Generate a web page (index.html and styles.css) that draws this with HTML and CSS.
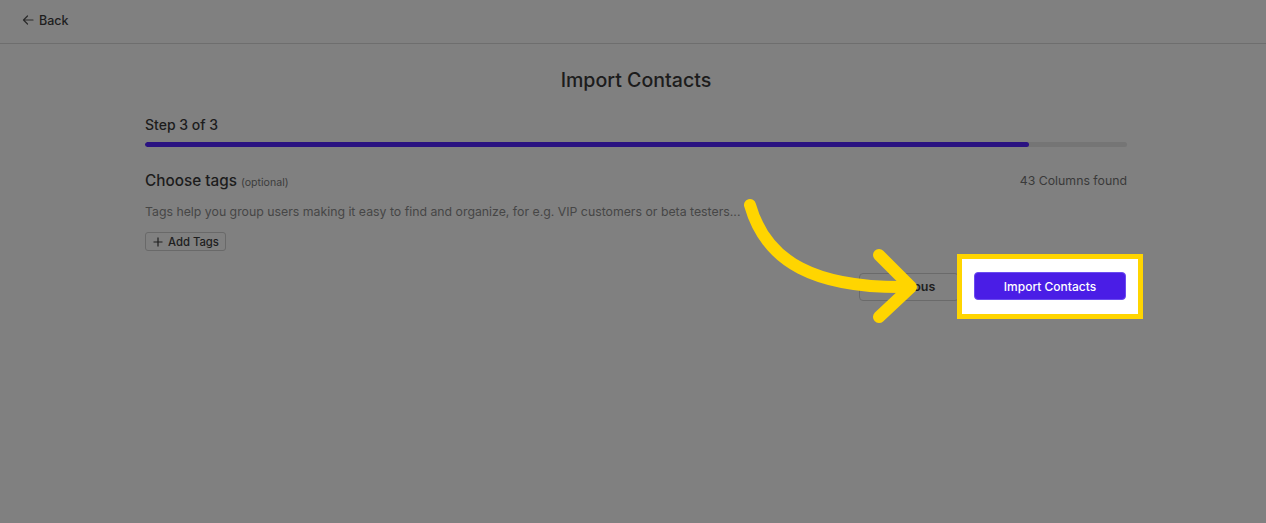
FILE: index.html
```html
<!DOCTYPE html>
<html lang="en">
<head>
  <meta charset="UTF-8" />
  <title>Import Contacts</title>
  <link rel="stylesheet" href="styles.css">
</head>
<body>
  <header class="topbar">
    <a class="back-link" href="#">
      <svg width="12" height="12" viewBox="0 0 12 12" aria-hidden="true">
        <path d="M11 6H1.5M5.5 2L1.5 6l4 4" stroke="#2a2a2a" stroke-width="1.2" fill="none" stroke-linecap="round" stroke-linejoin="round" />
      </svg>
      <span>Back</span>
    </a>
  </header>

  <main class="page">
    <h1 class="title">Import Contacts</h1>
    <div class="step">Step 3 of 3</div>
    <div class="progress"><div class="progress-fill" style="width: 90%"></div></div>

    <div class="section-head">
      <div class="section-title">Choose tags <span class="optional">(optional)</span></div>
      <div class="columns-found">43 Columns found</div>
    </div>
    <p class="hint">Tags help you group users making it easy to find and organize, for e.g. VIP customers or beta testers...</p>
    <button class="add-tags">
      <svg width="10" height="10" viewBox="0 0 10 10" aria-hidden="true">
        <path d="M5 0.5v9M0.5 5h9" stroke="#1e1e1e" stroke-width="1.2" fill="none" />
      </svg>
      Add Tags
    </button>

    <div class="actions">
      <button class="btn-prev">Previous</button>
      <div class="highlight">
        <button class="btn-import">Import Contacts</button>
      </div>
    </div>
  </main>

  <svg class="pointer-arrow" width="1266" height="523" viewBox="0 0 1266 523" aria-hidden="true">
    <g stroke="#ffd500" stroke-width="12" fill="none" stroke-linecap="round" stroke-linejoin="round">
      <path d="M750 205 C766 262, 815 289, 910 287" />
      <path d="M879 255 L911 287 L879 317" />
    </g>
  </svg>
</body>
</html>
```

FILE: styles.css
```css
body {
  margin: 0;
  background: #808080;
  font-family: Inter, "Noto Sans", sans-serif;
  color: #1c1c1c;
  position: relative;
  min-height: 523px;
}
.topbar {
  height: 43px;
  border-bottom: 1px solid #6e6e6e;
  display: flex;
  align-items: center;
  padding-left: 22px;
}
.back-link {
  display: flex;
  align-items: center;
  gap: 5px;
  color: #1e1e1e;
  text-decoration: none;
  font-size: 12.5px;
  font-weight: 500;
  margin-top: -3px;
}
.page {
  width: 982px;
  margin-left: 145px;
}
.title {
  margin: 24px 0 0;
  text-align: center;
  font-size: 19.6px;
  line-height: 24px;
  font-weight: 500;
}
.step {
  margin-top: 23px;
  font-size: 14px;
  line-height: 20px;
  font-weight: 500;
}
.progress {
  margin-top: 7px;
  height: 5px;
  border-radius: 3px;
  background: #757575;
  overflow: hidden;
}
.progress-fill {
  height: 100%;
  background: #2a1281;
  border-radius: 3px;
}
.section-head {
  margin-top: 22px;
  display: flex;
  justify-content: space-between;
  align-items: center;
  height: 22px;
}
.section-title {
  font-size: 15.3px;
  font-weight: 500;
}
.optional {
  font-size: 10.6px;
  font-weight: 400;
  color: #3c3c3c;
}
.columns-found {
  font-size: 12.3px;
  color: #3a3a3a;
}
.hint {
  margin: 12px 0 0;
  font-size: 12.3px;
  line-height: 18px;
  color: #464646;
}
.add-tags {
  margin-top: 11px;
  height: 19px;
  padding: 0 6px 0 7px;
  display: flex;
  align-items: center;
  gap: 5px;
  font-family: inherit;
  font-size: 11.3px;
  font-weight: 500;
  color: #1e1e1e;
  background: #808080;
  border: 1px solid #696969;
  border-radius: 3px;
}
.actions {
  margin-top: 3px;
  margin-right: -16px;
  display: flex;
  justify-content: flex-end;
  align-items: center;
}
.btn-prev {
  width: 100px;
  height: 28px;
  margin-right: -2px;
  font-family: inherit;
  font-size: 12.5px;
  font-weight: 600;
  color: #1e1e1e;
  background: #808080;
  border: 1px solid #6a6a6a;
  border-radius: 4px;
}
.highlight {
  border: 5px solid #ffd500;
  background: #fff;
  padding: 13px 12px 14px;
  display: flex;
  position: relative;
}
.btn-import {
  width: 152px;
  height: 28px;
  font-family: inherit;
  font-size: 12px;
  font-weight: 500;
  color: #fff;
  background: #4a1de6;
  border: 1px solid #6b4cf0;
  border-radius: 4px;
}
.pointer-arrow {
  position: absolute;
  top: 0;
  left: 0;
  pointer-events: none;
}
```
